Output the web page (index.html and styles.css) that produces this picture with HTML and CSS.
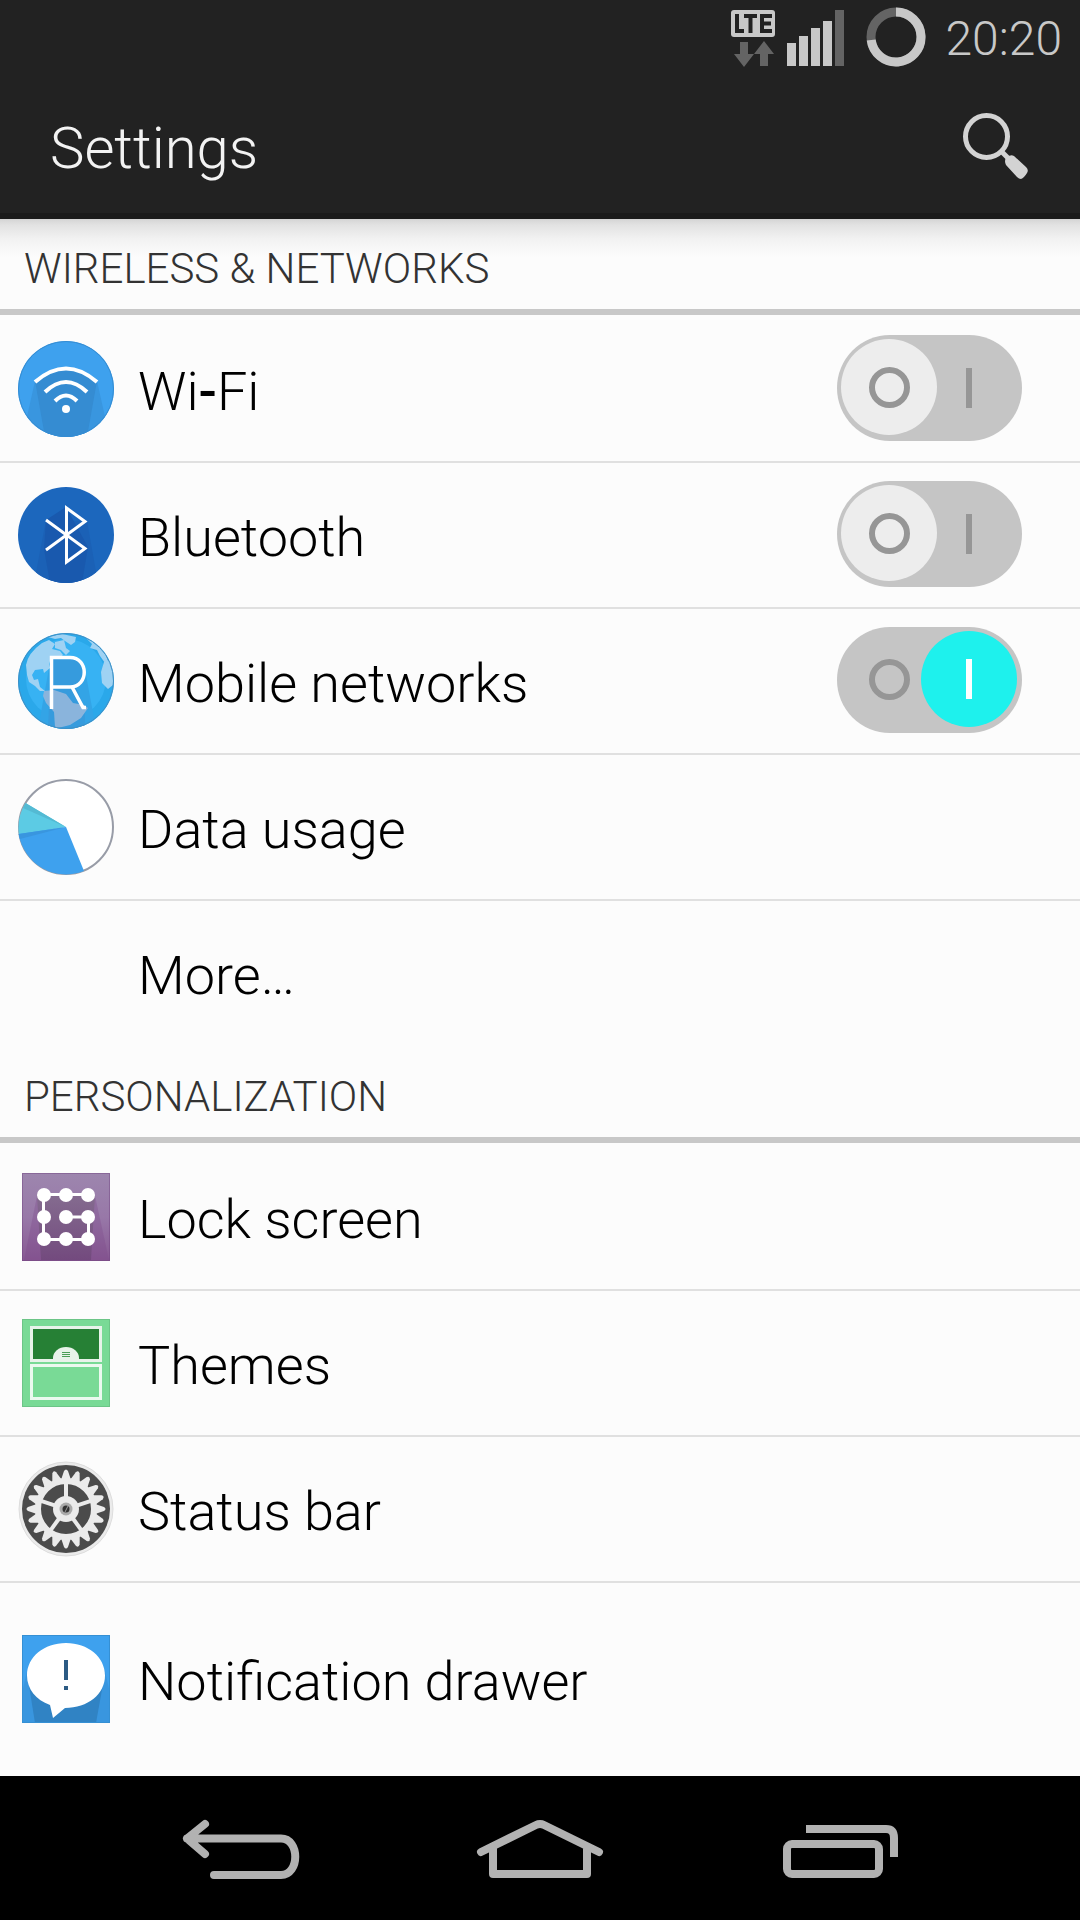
FILE: index.html
```html
<!DOCTYPE html>
<html lang="en">
<head>
<meta charset="utf-8">
<meta name="viewport" content="width=device-width, initial-scale=1">
<title>Settings</title>
<link rel="stylesheet" href="styles.css">
</head>
<body>
<div class="screen">
  <div class="status-bar">
    <svg class="lte" width="44" height="60" viewBox="0 0 44 60" role="img" aria-label="LTE data">
      <rect x="0" y="2" width="44" height="27" rx="3" fill="#c8c8c8"/>
      <path d="M6 6V23H13M13 8H26M19.500 8V25M41 8H31V23H41M31 15.500H40" fill="none" stroke="#222" stroke-width="4"/>
      <path d="M9 34h8v12h6L13 59 3 46h6zM29 58h8V46h6L33 33 23 46h6z" fill="#646464"/>
    </svg>
    <svg class="signal" width="57" height="56" viewBox="0 0 57 56" role="img" aria-label="Signal strength">
      <path d="M0 33h9v23H0zM12 26h9v30h-9zM24 18h9v38h-9zM36 11h9v45h-9z" fill="#c8c8c8"/>
      <path d="M48 0h9v56h-9z" fill="#646464"/>
    </svg>
    <svg class="battery" width="60" height="60" viewBox="0 0 60 60" role="img" aria-label="Battery">
      <circle cx="30" cy="30" r="25" fill="none" stroke="#646464" stroke-width="9"/>
      <path d="M30 5A25 25 0 1 1 5.200 33" fill="none" stroke="#c8c8c8" stroke-width="9"/>
    </svg>
    <time class="clock">20:20</time>
  </div>
  <header class="action-bar">
    <h1 class="title">Settings</h1>
    <button class="icon-button" type="button" aria-label="Search">
      <svg width="66" height="66" viewBox="0 0 66 66">
        <circle cx="23.500" cy="23.500" r="21" fill="none" stroke="#d3d3d3" stroke-width="5"/>
        <path d="M38 38l8 8" stroke="#d3d3d3" stroke-width="5"/>
        <path d="M43 45q4-4 8-2l12 11q3 3 1 6q-3 5-6 6q-2 0-4-2L43 52q-2-4 0-7z" fill="#d3d3d3"/>
      </svg>
    </button>
  </header>
  <main class="content">
    <section class="group">
      <h2 class="group-title">WIRELESS &amp; NETWORKS</h2>
      <ul class="list">
        <li class="row">
          <svg class="icon" viewBox="0 0 96 96" aria-hidden="true">
            <clipPath id="disc"><circle cx="48" cy="48" r="48"/></clipPath>
            <circle cx="48" cy="48" r="48" fill="#3ea1ee"/>
            <g clip-path="url(#disc)">
              <path d="M17 40L8 80V96H88V80L79 40z" fill="#3996df"/>
              <path d="M17 40Q48 12 79 40L69 96H27z" fill="#358cd2"/>
            </g>
            <circle cx="48" cy="48" r="47.500" fill="none" stroke="#358cd2"/>
            <g fill="none" stroke="#fff" stroke-width="4">
              <path d="M17 41Q48 14 79 41M27 51Q48 31 69 51M37 60Q48 49 59 60"/>
            </g>
            <circle cx="48" cy="68" r="4" fill="#fff"/>
          </svg>
          <label class="label" for="wifi">Wi<span class="hyphen">-</span>Fi</label>
          <input class="switch" id="wifi" type="checkbox" role="switch">
        </li>
        <li class="row">
          <svg class="icon" viewBox="0 0 96 96" aria-hidden="true">
            <circle cx="48" cy="48" r="48" fill="#1c67bd"/>
            <g clip-path="url(#disc)">
              <path d="M28 33L16 96H80L69 34z" fill="#1b61b6"/>
              <path d="M48 20L28 33 26 62 32 96H64L70 60z" fill="#1959ae"/>
            </g>
            <path d="M28 33L67 61.500 48.500 75V21L67 34.500 28 63" fill="none" stroke="#fff" stroke-width="3"/>
          </svg>
          <label class="label" for="bluetooth">Bluetooth</label>
          <input class="switch" id="bluetooth" type="checkbox" role="switch">
        </li>
        <li class="row">
          <svg class="icon" viewBox="0 0 96 96" aria-hidden="true">
            <circle cx="48" cy="48" r="48" fill="#2aa8ea"/>
            <circle cx="48" cy="46" r="40" fill="#37b2f3"/>
            <g clip-path="url(#disc)">
              <path d="M33 24L20 96H78L68 42z" fill="#33a4e6"/>
              <path d="M33 24H58Q68 28 67 42L58 54 67 75V96H30z" fill="#369bdd"/>
              <path d="M9 42L8 32Q10 20 24 10L31 7 37 11 34 16 42 18 45 22 40 26 33 25 31 31 32 35 26 40 25 36 17 37 14 42 16 47 20 46 22 54 27 58 22 58 17 53 11 49zM30 4L44 1 58 4 57 9 53 12 47 8 43 5 37 6zM37 9l9-2 2 8 4 3-4 4-5-5-6-2zM67 4L78 9 88 22 91 31 87 30 82 23 79 17 72 15 74 11zM86 29L91 27 95 38 95 52 90 56 84 50 83 39z" fill="#9fd2f3"/>
              <path d="M26 58L36 57 48 61 55 70 66 72 70 75 63 85 52 92 40 95 37 94 36 79 28 70 25 63z" fill="#8ab4dc"/>
            </g>
            <circle cx="48" cy="48" r="47.500" fill="none" stroke="#418fc4"/>
            <path d="M33.500 76V24.500H52C71 24.500 71 54 52 54H35M54 54L65 74.500H68" fill="none" stroke="#fff" stroke-width="3.500"/>
          </svg>
          <label class="label" for="mobile">Mobile networks</label>
          <input class="switch" id="mobile" type="checkbox" role="switch" checked>
        </li>
        <li class="row">
          <svg class="icon" viewBox="0 0 96 96" aria-hidden="true">
            <circle cx="48" cy="48" r="47" fill="#fff" stroke="#989ca7" stroke-width="2"/>
            <path d="M48 48L7.500 24A48 48 0 0 0 1 56z" fill="#5ccbe4"/>
            <path d="M48 48L7.500 24L5 29z" fill="#54bad3"/>
            <path d="M48 48L.700 55A48 48 0 0 0 66 92z" fill="#3ea1ee"/>
            <path d="M48 48L.700 55 2 60z" fill="#3996df"/>
          </svg>
          <a class="label" href="#data-usage">Data usage</a>
        </li>
        <li class="row">
          <span class="icon"></span>
          <a class="label" href="#more">More…</a>
        </li>
      </ul>
    </section>
    <section class="group">
      <h2 class="group-title">PERSONALIZATION</h2>
      <ul class="list">
        <li class="row">
          <svg class="icon" viewBox="0 0 96 96" aria-hidden="true">
            <linearGradient id="plum" x2="0" y2="1"><stop stop-color="#9d86ae"/><stop offset=".5" stop-color="#9878a8"/><stop offset="1" stop-color="#875892"/></linearGradient>
            <linearGradient id="plum-shade" x2="0" y2="1"><stop stop-color="#846b8f"/><stop offset="1" stop-color="#734a7e"/></linearGradient>
            <rect x="4" y="4" width="88" height="88" fill="url(#plum)"/>
            <path d="M19 27L6 91H91L77 27z" fill="#7c4787" opacity=".3"/>
            <path d="M19 27H77L73 91H23z" fill="url(#plum-shade)"/>
            <rect x="4.500" y="4.500" width="87" height="87" fill="none" stroke="#6c3c7a" stroke-opacity=".4"/>
            <path d="M48 48H70.500V70.500H25.500V25.500H70" fill="none" stroke="#fff" stroke-width="3"/>
            <g fill="#fff"><circle cx="26" cy="26" r="7"/><circle cx="48" cy="26" r="7"/><circle cx="70" cy="26" r="7"/><circle cx="26" cy="48" r="7"/><circle cx="48" cy="48" r="7"/><circle cx="70" cy="48" r="7"/><circle cx="26" cy="70" r="7"/><circle cx="48" cy="70" r="7"/><circle cx="70" cy="70" r="7"/></g>
          </svg>
          <a class="label" href="#lock-screen">Lock screen</a>
        </li>
        <li class="row">
          <svg class="icon" viewBox="0 0 96 96" aria-hidden="true">
            <rect x="4.500" y="4.500" width="87" height="87" fill="#79da96" stroke="#6cc587"/>
            <rect x="13.500" y="12.500" width="69" height="33" fill="#268035" stroke="#e8f3ea" stroke-width="3"/>
            <rect x="13.500" y="50.500" width="69" height="33" fill="#79da96" stroke="#ebf9ef" stroke-width="3"/>
            <path d="M35 45V43a13 11 0 0 1 26 0V45z" fill="#e8f3ea"/>
            <path d="M44 37.500h8M44 39.500h8M44 41.500h8" stroke="#4b9e58"/>
          </svg>
          <a class="label" href="#themes">Themes</a>
        </li>
        <li class="row">
          <svg class="icon" viewBox="0 0 96 96" aria-hidden="true">
            <circle cx="48" cy="48" r="47" fill="#ebebeb" stroke="#ddd"/>
            <circle cx="48" cy="48" r="44" fill="#4b4b4b"/>
            <circle cx="48" cy="48" r="28" fill="none" stroke="#ebebeb" stroke-width="6"/>
            <g fill="#ebebeb" transform="translate(48 48)">
              <g id="teeth-quarter">
                <path id="tooth" d="M-5-29L-2-38Q0-41 2-38L5-29z"/>
                <use href="#tooth" transform="rotate(18)"/>
                <use href="#tooth" transform="rotate(36)"/>
                <use href="#tooth" transform="rotate(54)"/>
                <use href="#tooth" transform="rotate(72)"/>
              </g>
              <use href="#teeth-quarter" transform="rotate(90)"/>
              <use href="#teeth-quarter" transform="rotate(180)"/>
              <use href="#teeth-quarter" transform="rotate(270)"/>
              <path id="spoke" d="M-2-27h4V-8h-4z"/>
              <use href="#spoke" transform="rotate(72)"/>
              <use href="#spoke" transform="rotate(144)"/>
              <use href="#spoke" transform="rotate(216)"/>
              <use href="#spoke" transform="rotate(288)"/>
              <circle r="13"/>
              <circle r="6.500" fill="#aaa"/>
              <circle r="3.500" fill="#333"/>
              <path d="M-1 3L2-3" stroke="#999"/>
            </g>
          </svg>
          <a class="label" href="#status-bar">Status bar</a>
        </li>
        <li class="row row-tall">
          <svg class="icon" viewBox="0 0 96 96" aria-hidden="true">
            <rect x="4" y="4" width="88" height="88" fill="#3ea1ee"/>
            <path d="M9 40L4 62V92H92V62L87 40z" fill="#3996df"/>
            <path d="M9 42L17 92H78L87 42z" fill="#3083c4"/>
            <rect x="4.500" y="4.500" width="87" height="87" fill="none" stroke="#3590d4"/>
            <path d="M48 12C70 12 87 26 87 44.500S70 77 47 77L35 87 32 74C18 69 9 58 9 44.500 9 26 26 12 48 12z" fill="#fff"/>
            <path d="M46 29h4v20h-4zM46 55h4v4h-4z" fill="#2c5b84"/>
          </svg>
          <a class="label" href="#notification-drawer">Notification drawer</a>
        </li>
      </ul>
    </section>
  </main>
  <nav class="nav-bar" aria-label="System">
    <button class="nav-button" type="button" aria-label="Back">
      <svg width="120" height="70" viewBox="0 0 120 70">
        <path d="M25 11L7 25.500 25 41M7 25.500H101C120 25.500 120 62 101 62H34" fill="none" stroke="#b2b2b2" stroke-width="8" stroke-linecap="round" stroke-linejoin="round"/>
      </svg>
    </button>
    <button class="nav-button" type="button" aria-label="Home">
      <svg width="130" height="70" viewBox="0 0 130 70">
        <path d="M6 39L61 12Q65 10 69 12L124 39M18 34V61H112V34" fill="none" stroke="#b2b2b2" stroke-width="8" stroke-linecap="round" stroke-linejoin="round"/>
      </svg>
    </button>
    <button class="nav-button" type="button" aria-label="Recent apps">
      <svg width="120" height="70" viewBox="0 0 120 70">
        <rect x="7" y="31" width="92" height="30" rx="5" fill="none" stroke="#b2b2b2" stroke-width="8"/>
        <path d="M26 16H106Q114 16 114 25V44" fill="none" stroke="#b2b2b2" stroke-width="8"/>
      </svg>
    </button>
  </nav>
</div>
</body>
</html>
```
FILE: styles.css
```css
*, *::before, *::after { box-sizing: border-box; }

body {
  margin: 0;
  background: #fcfcfc;
  color: #000;
  font-family: Roboto, "Noto Sans", sans-serif;
  font-weight: 300;
}

.screen {
  display: flex;
  flex-direction: column;
  min-height: 100vh;
}

.status-bar {
  display: flex;
  align-items: flex-start;
  justify-content: flex-end;
  height: 75px;
  padding: 8px 18px 0 0;
  background: #222;
  color: #c8c8c8;
}

.signal { margin: 2px 0 0 12px; }
.battery { margin: -1px 19px 0 22px; }
.clock { font-size: 48px; line-height: 62px; }

.action-bar {
  display: flex;
  align-items: center;
  justify-content: space-between;
  height: 144px;
  padding: 4px 51px 0 50px;
  border-bottom: 6px solid #1b1b1b;
  background: #222;
}

.title {
  margin: 0;
  padding-top: 4px;
  color: #f3f3f3;
  font-size: 58px;
  font-weight: 300;
}

button {
  padding: 0;
  border: 0;
  background: none;
}

.icon-button svg, .nav-button svg { display: block; }

.content {
  flex: 1;
  background: linear-gradient(#d4d4d4, #e2e2e2 6px, #f2f2f2 20px, #fcfcfc 38px);
}

.group + .group { padding-top: 2px; }

.group-title {
  display: flex;
  align-items: center;
  height: 96px;
  margin: 0;
  padding: 8px 24px 0;
  border-bottom: 6px solid #c8c8c8;
  color: #333;
  font-size: 42px;
  font-weight: 300;
}

.list {
  margin: 0;
  padding: 0;
  list-style: none;
}

.row {
  display: flex;
  align-items: center;
  gap: 24px;
  height: 146px;
  padding: 0 58px 0 18px;
  border-top: 2px solid #e0e0e0;
}

.row:first-child { border-top-color: transparent; }
.row-tall { height: 194px; }

.icon {
  flex: none;
  width: 96px;
  height: 96px;
}

.label {
  flex: 1;
  padding-top: 6px;
  color: #000;
  font-size: 54px;
  line-height: 64px;
  text-decoration: none;
}

.hyphen { font-weight: 500; }

.switch {
  position: relative;
  flex: none;
  width: 185px;
  height: 106px;
  margin: 0 0 2px;
  border-radius: 53px;
  background:
    linear-gradient(#969696, #969696) 129px 33px / 6px 40px no-repeat,
    #c5c5c5;
  appearance: none;
}

.switch::before {
  position: absolute;
  top: 4px;
  left: 4px;
  width: 96px;
  height: 96px;
  border-radius: 50%;
  background: #ededed;
  content: "";
}

.switch::after {
  position: absolute;
  top: 32px;
  left: 32px;
  width: 41px;
  height: 41px;
  border: 6px solid #969696;
  border-radius: 50%;
  content: "";
}

.switch:checked::before {
  left: 84px;
  background: linear-gradient(#fff, #fff) 45px 28px / 6px 40px no-repeat, #1ef1ed;
}

.nav-bar {
  display: grid;
  grid-template-columns: repeat(3, 300px);
  justify-content: center;
  height: 144px;
  background: #000;
}

.nav-button {
  display: grid;
  place-items: center;
}
```
